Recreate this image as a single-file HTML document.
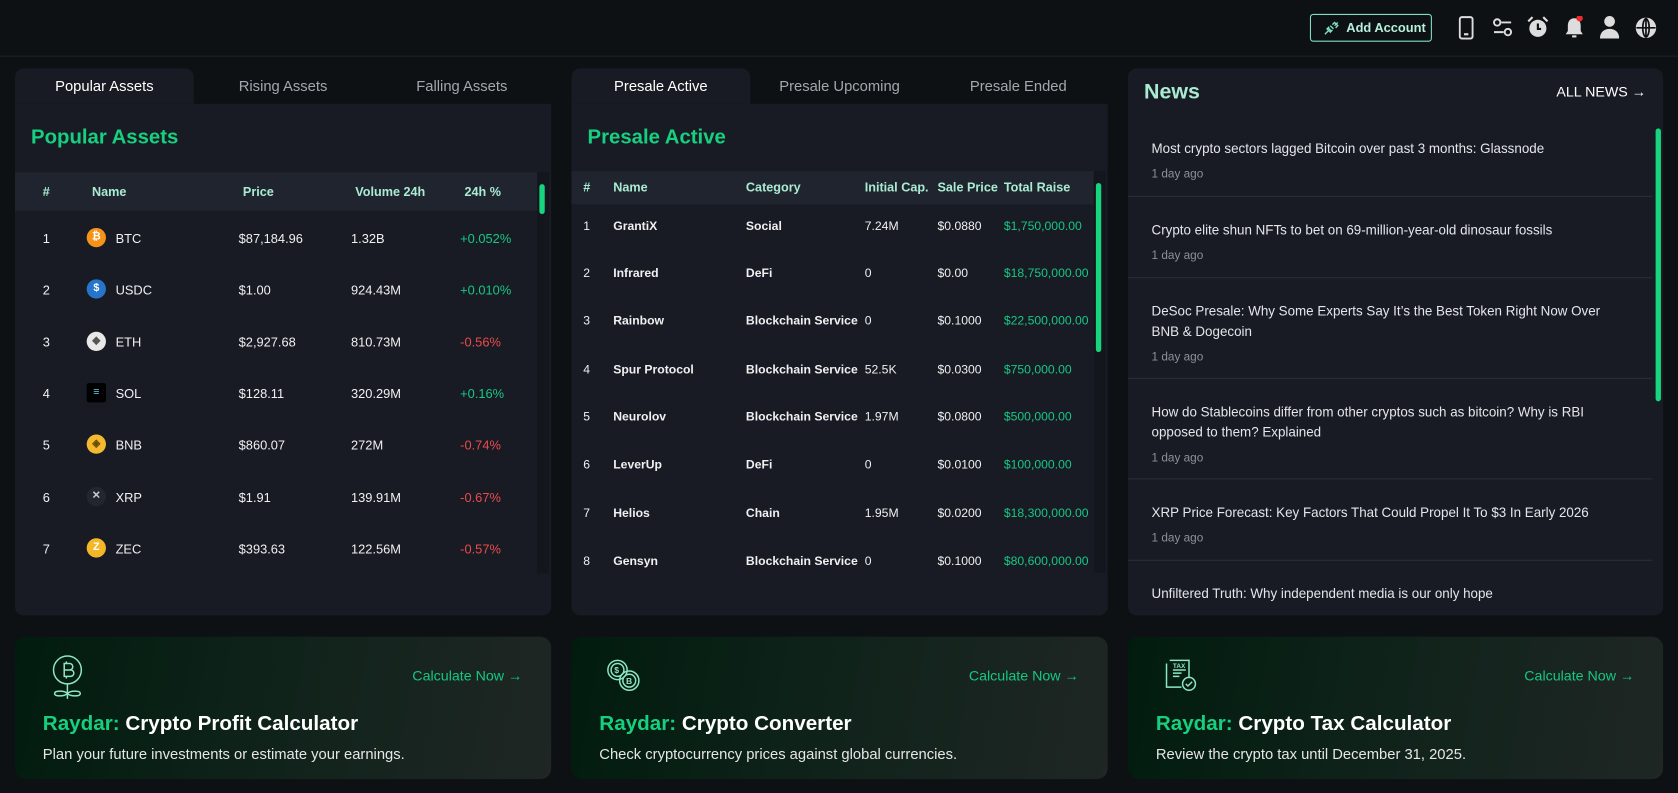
<!DOCTYPE html>
<html><head><meta charset="utf-8"><style>
*{box-sizing:border-box;margin:0;padding:0}
body{width:1678px;height:793px;background:#0e1114;font-family:"Liberation Sans",sans-serif;color:#e8eaee;position:relative;overflow:hidden}
#w{position:absolute;left:0;top:0;width:1568px;height:741px;transform:scale(1.0702);transform-origin:0 0}
.top{position:absolute;left:0;top:0;width:1568px;height:53px;border-bottom:1px solid #1d2027}
.btn{position:absolute;left:1224px;top:13px;width:114px;height:26px;border:1px solid #7fe0c0;border-radius:3px;color:#b6f0dc;font-size:12px;font-weight:bold;line-height:24px;padding-left:33px}
.ic{position:absolute;top:15px}
.panel{position:absolute;top:64px;width:501px;height:511px;background:#181b24;border-radius:8px;overflow:hidden}
.tabs{height:33px;display:flex;background:#0e1114}
.tab{flex:1;text-align:center;font-size:13.8px;line-height:33px;color:#a3a7b0}
.tab.a{background:#181b24;color:#fff;border-radius:8px 8px 0 0}
h2{color:#17d07f;font-size:19px;font-weight:bold;position:absolute;left:15px;top:54px}
.th{position:absolute;left:0;background:#20242e;font-size:11.8px;font-weight:bold;color:#a9ebd2}
.c{position:absolute;white-space:nowrap}
.r{position:absolute;left:0;width:490px;font-size:12px;color:#f0f0f0}
.g{color:#17c784}.red{color:#ea4c4c}
.sb{position:absolute;width:5px;background:#17d47f;border-radius:3px}
.coin{position:absolute;width:18px;height:18px;border-radius:50%;top:-3px;left:67px;font-size:10px;font-weight:bold;text-align:center;line-height:18px;color:#fff}
.news .it{position:absolute;left:22px;width:440px;font-size:12.5px;color:#e4e6ea;line-height:19px}
.news .t{font-size:11px;color:#8c9098;margin-top:5px}
.hr{position:absolute;left:0;width:490px;height:1px;background:#2a2e37}
.card{position:absolute;top:595px;width:501px;height:133px;border-radius:10px;background:linear-gradient(100deg,#011c0e 0%,#10231b 50%,#1f2624 100%)}
.card .cn{position:absolute;right:27px;top:29px;color:#17c784;font-size:13.3px}
.card .tt{position:absolute;left:26px;top:71px;font-size:19.3px;font-weight:bold;color:#fff}
.card .tt span{color:#17d07f}
.card .ds{position:absolute;left:26px;top:102px;font-size:13.8px;color:#e6e6e6}
.pr .r .c{font-size:11.4px}
</style></head><body><div id="w">
<div class="top">
 <div class="btn"><svg style="position:absolute;left:12px;top:6px" width="14" height="13" viewBox="0 0 14 13" fill="none" stroke="#7fe0c0" stroke-width="1.3"><path d="M1 12l3-3M13 1l-3 3M4 6l3 3M6 4l3 3M5 5l-2 2 3 3 2-2M8 3l2-2 3 3-2 2"/></svg>Add Account</div>
 <svg class="ic" style="left:1363px" width="14" height="22" viewBox="0 0 14 22"><rect x="1" y="1" width="12" height="20" rx="2" fill="none" stroke="#ddd" stroke-width="1.8"/><rect x="5" y="16" width="4" height="2" fill="#ddd"/></svg>
 <svg class="ic" style="left:1394px;top:16px" width="20" height="20" viewBox="0 0 20 20" fill="none" stroke="#ddd" stroke-width="1.8"><circle cx="5" cy="5" r="3"/><path d="M9 5h9M2 14h9"/><circle cx="15" cy="14" r="3"/></svg>
 <svg class="ic" style="left:1427px;top:15px" width="20" height="21" viewBox="0 0 20 21"><circle cx="10" cy="11.5" r="8" fill="#ddd"/><path d="M10 7v5h3" stroke="#0e1114" stroke-width="2" fill="none"/><path d="M1 5l4-4M19 5l-4-4" stroke="#ddd" stroke-width="2"/></svg>
 <svg class="ic" style="left:1462px;top:15px" width="18" height="22" viewBox="0 0 18 22"><path d="M9 2c-4 0-6 3-6 7v5l-2 3h16l-2-3V9c0-4-2-7-6-7z" fill="#ddd"/><rect x="7" y="18" width="4" height="2" fill="#ddd"/><circle cx="14" cy="2" r="3" fill="#ee2b2b"/></svg>
 <svg class="ic" style="left:1495px;top:15px" width="18" height="21" viewBox="0 0 18 21" fill="#ddd"><circle cx="9" cy="5" r="5"/><path d="M0 21c0-6 4-9 9-9s9 3 9 9z"/></svg>
 <svg class="ic" style="left:1528px;top:16px" width="20" height="20" viewBox="0 0 20 20"><circle cx="10" cy="10" r="9.5" fill="#ddd"/><path d="M10 1v18M1 10h18M10 1c-4 3-4 15 0 18M10 1c4 3 4 15 0 18" stroke="#0e1114" stroke-width="1.6" fill="none"/></svg>
</div>

<div class="panel" style="left:14px">
 <div class="tabs"><div class="tab a">Popular Assets</div><div class="tab">Rising Assets</div><div class="tab">Falling Assets</div></div>
 <h2>Popular Assets</h2>
 <div class="th" style="top:97px;width:488px;height:36px"><span class="c" style="left:26px;top:11px">#</span><span class="c" style="left:72px;top:11px">Name</span><span class="c" style="left:213px;top:11px">Price</span><span class="c" style="left:318px;top:11px">Volume 24h</span><span class="c" style="left:420px;top:11px">24h %</span></div>
 <div style="position:absolute;left:488px;top:97px;width:11px;height:375px;background:#14161d"></div>
 <div class="sb" style="left:490px;top:108px;height:28px"></div>
 <div class="r" style="top:152px"><span class="c" style="left:26px">1</span><span class="coin" style="background:#f7931a">₿</span><span class="c" style="left:94px">BTC</span><span class="c" style="left:209px">$87,184.96</span><span class="c" style="left:314px">1.32B</span><span class="c g" style="left:416px">+0.052%</span></div>
 <div class="r" style="top:200px"><span class="c" style="left:26px">2</span><span class="coin" style="background:#2775ca">$</span><span class="c" style="left:94px">USDC</span><span class="c" style="left:209px">$1.00</span><span class="c" style="left:314px">924.43M</span><span class="c g" style="left:416px">+0.010%</span></div>
 <div class="r" style="top:249px"><span class="c" style="left:26px">3</span><span class="coin" style="background:#e8e8e8;color:#555">◆</span><span class="c" style="left:94px">ETH</span><span class="c" style="left:209px">$2,927.68</span><span class="c" style="left:314px">810.73M</span><span class="c red" style="left:416px">-0.56%</span></div>
 <div class="r" style="top:297px"><span class="coin" style="background:#000;border-radius:2px;color:#6ce">≡</span><span class="c" style="left:26px">4</span><span class="c" style="left:94px">SOL</span><span class="c" style="left:209px">$128.11</span><span class="c" style="left:314px">320.29M</span><span class="c g" style="left:416px">+0.16%</span></div>
 <div class="r" style="top:345px"><span class="c" style="left:26px">5</span><span class="coin" style="background:#f3ba2f;color:#6a4b00">◈</span><span class="c" style="left:94px">BNB</span><span class="c" style="left:209px">$860.07</span><span class="c" style="left:314px">272M</span><span class="c red" style="left:416px">-0.74%</span></div>
 <div class="r" style="top:394px"><span class="c" style="left:26px">6</span><span class="coin" style="background:#23262e;color:#ccc">✕</span><span class="c" style="left:94px">XRP</span><span class="c" style="left:209px">$1.91</span><span class="c" style="left:314px">139.91M</span><span class="c red" style="left:416px">-0.67%</span></div>
 <div class="r" style="top:442px"><span class="c" style="left:26px">7</span><span class="coin" style="background:#f4b728">Z</span><span class="c" style="left:94px">ZEC</span><span class="c" style="left:209px">$393.63</span><span class="c" style="left:314px">122.56M</span><span class="c red" style="left:416px">-0.57%</span></div>
</div>

<div class="panel pr" style="left:534px">
 <div class="tabs"><div class="tab a">Presale Active</div><div class="tab">Presale Upcoming</div><div class="tab">Presale Ended</div></div>
 <h2>Presale Active</h2>
 <div class="th" style="top:96px;width:488px;height:31px"><span class="c" style="left:11px;top:8px">#</span><span class="c" style="left:39px;top:8px">Name</span><span class="c" style="left:163px;top:8px">Category</span><span class="c" style="left:274px;top:8px">Initial Cap.</span><span class="c" style="left:342px;top:8px">Sale Price</span><span class="c" style="left:404px;top:8px">Total Raise</span></div>
 <div style="position:absolute;left:488px;top:96px;width:11px;height:375px;background:#14161d"></div>
 <div class="sb" style="left:490px;top:107px;height:158px"></div>
 <div class="r" style="top:142px;font-weight:bold"><span class="c" style="left:11px;font-weight:normal">1</span><span class="c" style="left:39px">GrantiX</span><span class="c" style="left:163px">Social</span><span class="c" style="left:274px;font-weight:normal">7.24M</span><span class="c" style="left:342px;font-weight:normal">$0.0880</span><span class="c g" style="left:404px;font-weight:normal">$1,750,000.00</span></div>
 <div class="r" style="top:186px;font-weight:bold"><span class="c" style="left:11px;font-weight:normal">2</span><span class="c" style="left:39px">Infrared</span><span class="c" style="left:163px">DeFi</span><span class="c" style="left:274px;font-weight:normal">0</span><span class="c" style="left:342px;font-weight:normal">$0.00</span><span class="c g" style="left:404px;font-weight:normal">$18,750,000.00</span></div>
 <div class="r" style="top:230px;font-weight:bold"><span class="c" style="left:11px;font-weight:normal">3</span><span class="c" style="left:39px">Rainbow</span><span class="c" style="left:163px">Blockchain Service</span><span class="c" style="left:274px;font-weight:normal">0</span><span class="c" style="left:342px;font-weight:normal">$0.1000</span><span class="c g" style="left:404px;font-weight:normal">$22,500,000.00</span></div>
 <div class="r" style="top:276px;font-weight:bold"><span class="c" style="left:11px;font-weight:normal">4</span><span class="c" style="left:39px">Spur Protocol</span><span class="c" style="left:163px">Blockchain Service</span><span class="c" style="left:274px;font-weight:normal">52.5K</span><span class="c" style="left:342px;font-weight:normal">$0.0300</span><span class="c g" style="left:404px;font-weight:normal">$750,000.00</span></div>
 <div class="r" style="top:320px;font-weight:bold"><span class="c" style="left:11px;font-weight:normal">5</span><span class="c" style="left:39px">Neurolov</span><span class="c" style="left:163px">Blockchain Service</span><span class="c" style="left:274px;font-weight:normal">1.97M</span><span class="c" style="left:342px;font-weight:normal">$0.0800</span><span class="c g" style="left:404px;font-weight:normal">$500,000.00</span></div>
 <div class="r" style="top:365px;font-weight:bold"><span class="c" style="left:11px;font-weight:normal">6</span><span class="c" style="left:39px">LeverUp</span><span class="c" style="left:163px">DeFi</span><span class="c" style="left:274px;font-weight:normal">0</span><span class="c" style="left:342px;font-weight:normal">$0.0100</span><span class="c g" style="left:404px;font-weight:normal">$100,000.00</span></div>
 <div class="r" style="top:410px;font-weight:bold"><span class="c" style="left:11px;font-weight:normal">7</span><span class="c" style="left:39px">Helios</span><span class="c" style="left:163px">Chain</span><span class="c" style="left:274px;font-weight:normal">1.95M</span><span class="c" style="left:342px;font-weight:normal">$0.0200</span><span class="c g" style="left:404px;font-weight:normal">$18,300,000.00</span></div>
 <div class="r" style="top:455px;font-weight:bold"><span class="c" style="left:11px;font-weight:normal">8</span><span class="c" style="left:39px">Gensyn</span><span class="c" style="left:163px">Blockchain Service</span><span class="c" style="left:274px;font-weight:normal">0</span><span class="c" style="left:342px;font-weight:normal">$0.1000</span><span class="c g" style="left:404px;font-weight:normal">$80,600,000.00</span></div>
</div>

<div class="panel news" style="left:1054px;width:500px">
 <div style="position:absolute;left:15px;top:11px;font-size:20px;font-weight:bold;color:#a9ebd2">News</div>
 <div style="position:absolute;right:16px;top:14px;font-size:13.3px;color:#fff">ALL NEWS →</div>
 <div class="sb" style="left:493px;top:56px;height:255px;width:5px"></div>
 <div class="it" style="top:66px;width:460px">Most crypto sectors lagged Bitcoin over past 3 months: Glassnode<div class="t">1 day ago</div></div>
 <div class="hr" style="top:119px"></div>
 <div class="it" style="top:142px;width:460px">Crypto elite shun NFTs to bet on 69-million-year-old dinosaur fossils<div class="t">1 day ago</div></div>
 <div class="hr" style="top:195px"></div>
 <div class="it" style="top:218px">DeSoc Presale: Why Some Experts Say It’s the Best Token Right Now Over BNB &amp; Dogecoin<div class="t">1 day ago</div></div>
 <div class="hr" style="top:289px"></div>
 <div class="it" style="top:312px">How do Stablecoins differ from other cryptos such as bitcoin? Why is RBI opposed to them? Explained<div class="t">1 day ago</div></div>
 <div class="hr" style="top:383px"></div>
 <div class="it" style="top:406px;width:460px">XRP Price Forecast: Key Factors That Could Propel It To $3 In Early 2026<div class="t">1 day ago</div></div>
 <div class="hr" style="top:459px"></div>
 <div class="it" style="top:482px;width:460px">Unfiltered Truth: Why independent media is our only hope</div>
</div>

<div class="card" style="left:14px">
 <svg style="position:absolute;left:34px;top:16px" width="30" height="44" viewBox="0 0 30 44" fill="none" stroke="#8fe6c2" stroke-width="1.4"><circle cx="15" cy="15" r="13"/><path d="M12 9h5a3 3 0 010 6h-5zM12 15h6a3 3 0 010 6h-6zM12 9v12M14 7v2M14 21v2M15 28v14M15 37c-3-3-12-3-12 0s9 3 12 0c3-3 12-3 12 0s-9 3-12 0"/></svg>
 <div class="cn">Calculate Now →</div>
 <div class="tt"><span>Raydar:</span> Crypto Profit Calculator</div>
 <div class="ds">Plan your future investments or estimate your earnings.</div>
</div>
<div class="card" style="left:534px">
 <svg style="position:absolute;left:32px;top:20px" width="34" height="32" viewBox="0 0 34 32" fill="none" stroke="#8fe6c2" stroke-width="1.4"><circle cx="11" cy="11" r="9"/><circle cx="11" cy="11" r="6"/><circle cx="22" cy="21" r="9"/><circle cx="22" cy="21" r="6"/><text x="8" y="14" font-size="8" fill="#8fe6c2" stroke="none" font-weight="bold">$</text><text x="19" y="24" font-size="8" fill="#8fe6c2" stroke="none" font-weight="bold">B</text></svg>
 <div class="cn">Calculate Now →</div>
 <div class="tt"><span>Raydar:</span> Crypto Converter</div>
 <div class="ds">Check cryptocurrency prices against global currencies.</div>
</div>
<div class="card" style="left:1054px;width:500px">
 <svg style="position:absolute;left:32px;top:20px" width="34" height="32" viewBox="0 0 34 32" fill="none" stroke="#8fe6c2" stroke-width="1.4"><path d="M4 5v22h14M7 2h18v16"/><path d="M10 11h12M10 14h8M10 17h6"/><text x="10" y="9" font-size="6" fill="#8fe6c2" stroke="none" font-weight="bold">TAX</text><circle cx="25" cy="24" r="6"/><path d="M22 24l2 2 4-4"/></svg>
 <div class="cn">Calculate Now →</div>
 <div class="tt"><span>Raydar:</span> Crypto Tax Calculator</div>
 <div class="ds">Review the crypto tax until December 31, 2025.</div>
</div>
</div></body></html>
